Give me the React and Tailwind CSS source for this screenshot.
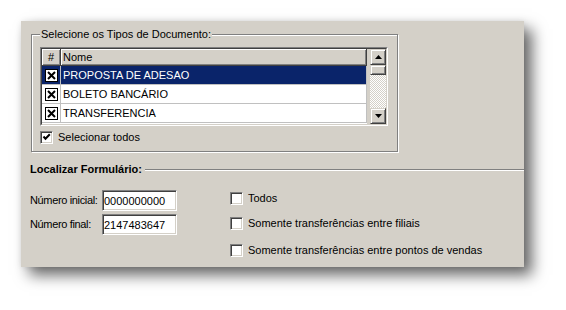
import React from 'react';

const rows = [
  { id: 1, name: 'PROPOSTA DE ADESAO', selected: true },
  { id: 2, name: 'BOLETO BANCÁRIO', selected: false },
  { id: 3, name: 'TRANSFERENCIA', selected: false },
];

const options = [
  { label: 'Todos', mt: 'mt-0' },
  { label: 'Somente transferências entre filiais', mt: 'mt-[12px]' },
  { label: 'Somente transferências entre pontos de vendas', mt: 'mt-[14px]' },
];

// bold X box used by the grid check column
function XBox() {
  return (
    <svg width="13" height="13" viewBox="0 0 13 13" className="block">
      <rect x="0.5" y="0.5" width="12" height="12" fill="white" stroke="black" />
      <path d="M3 3 L10 10 M10 3 L3 10" stroke="black" strokeWidth="2" />
    </svg>
  );
}

// sunken win98 style checkbox
function CheckBox({ checked }) {
  return (
    <div className="w-[13px] h-[13px] shrink-0 bg-white border border-t-[#808080] border-l-[#808080] border-b-white border-r-white shadow-[inset_1px_1px_0_#404040,inset_-1px_-1px_0_#d4d0c8]">
      {checked && (
        <svg width="11" height="11" viewBox="0 0 11 11" className="block">
          <path d="M2.5 4.5 L4.5 6.8 L8.8 2.2" fill="none" stroke="black" strokeWidth="2" />
        </svg>
      )}
    </div>
  );
}

function ScrollButton({ up }) {
  return (
    <div className="h-[16px] w-[16px] flex items-center justify-center bg-[#d4d0c8] border border-t-[#d4d0c8] border-l-[#d4d0c8] border-b-[#404040] border-r-[#404040] shadow-[inset_1px_1px_0_white,inset_-1px_-1px_0_#808080]">
      <svg width="7" height="4" viewBox="0 0 7 4" className="block">
        {up ? <path d="M3.5 0 L7 4 L0 4 Z" fill="black" /> : <path d="M0 0 L7 0 L3.5 4 Z" fill="black" />}
      </svg>
    </div>
  );
}

export default function App() {
  return (
    <div className="min-h-screen bg-white pt-[21px] pl-[21px] font-['Liberation_Sans',Arial,sans-serif] text-[11px] text-black select-none">
      <div className="w-[503px] h-[246px] bg-[#d4d0c8] shadow-[8px_8px_14px_rgba(0,0,0,0.6),0_0_6px_rgba(0,0,0,0.08)]">

        {/* TIPOS DE DOCUMENTO GROUP */}
        <div className="pt-[7px] pl-[10px]">
          <fieldset className="w-[367px] h-[124px] border border-[#808080] shadow-[inset_1px_1px_0_white,1px_1px_0_white] px-[8px]">
            <legend className="px-[1px] leading-[13px] bg-[#d4d0c8]">Selecione os Tipos de Documento:</legend>

            <div className="mt-[6px] w-[348px] h-[79px] border border-t-[#808080] border-l-[#808080] border-b-white border-r-white">
              <div className="h-full flex border border-t-[#404040] border-l-[#404040] border-b-[#d4d0c8] border-r-[#d4d0c8] bg-[#d4d0c8]">
                <div className="flex-1 overflow-hidden">
                  <div className="w-[325px] h-full bg-white flex flex-col">
                    <div className="h-[17px] flex shrink-0 bg-[#d4d0c8]">
                      <div className="w-[19px] flex items-center justify-center border-r border-b border-[#404040] shadow-[inset_1px_1px_0_white,inset_-1px_-1px_0_#808080]">#</div>
                      <div className="flex-1 flex items-center pl-[2px] border-r border-b border-[#404040] shadow-[inset_1px_1px_0_white,inset_-1px_-1px_0_#808080]">Nome</div>
                    </div>
                    {rows.map((r) => (
                      <div key={r.id} className={`h-[19px] flex shrink-0 ${r.selected ? 'bg-[#0a246a] text-white' : 'bg-white'}`}>
                        <div className="w-[19px] flex items-center justify-center border-r border-b border-[#c0c0c0]">
                          <XBox />
                        </div>
                        <div className="flex-1 flex items-center pl-[2px] border-b border-[#c0c0c0] border-r">{r.name}</div>
                      </div>
                    ))}
                  </div>
                </div>
                <div className="w-[16px] flex flex-col">
                  <ScrollButton up />
                  <div className="h-[10px] bg-[#d4d0c8] border border-t-[#d4d0c8] border-l-[#d4d0c8] border-b-[#404040] border-r-[#404040] shadow-[inset_1px_1px_0_white,inset_-1px_-1px_0_#808080]" />
                  <div className="flex-1 bg-[repeating-conic-gradient(#d4d0c8_0_25%,white_0_50%)] bg-[length:2px_2px]" />
                  <ScrollButton />
                </div>
              </div>
            </div>

            <div className="mt-[5px] flex items-center gap-[5px]">
              <CheckBox checked />
              <span className="leading-[13px]">Selecionar todos</span>
            </div>
          </fieldset>
        </div>

        {/* LOCALIZAR FORMULARIO */}
        <div className="mt-[11px] ml-[9px] flex items-center">
          <span className="font-bold leading-[13px]">Localizar Formulário:</span>
          <div className="flex-1 ml-[3px] h-[2px] border-t border-t-[#808080] border-b border-b-white" />
        </div>

        <div className="ml-[9px] flex">
          <div className="w-[200px] shrink-0 mt-[14px] flex flex-col gap-[3px]">
            <div className="flex items-center h-[21px]">
              <span className="w-[72px] shrink-0 whitespace-nowrap tracking-[-0.35px]">Número inicial:</span>
              <input readOnly value="0000000000" className="w-[75px] h-[21px] pl-[1px] outline-none bg-white font-['Liberation_Sans',Arial,sans-serif] text-[11px] border border-t-[#808080] border-l-[#808080] border-b-white border-r-white shadow-[inset_1px_1px_0_#404040,inset_-1px_-1px_0_#d4d0c8]" />
            </div>
            <div className="flex items-center h-[21px]">
              <span className="w-[72px] shrink-0 whitespace-nowrap tracking-[-0.35px]">Número final:</span>
              <input readOnly value="2147483647" className="w-[75px] h-[21px] pl-[1px] outline-none bg-white font-['Liberation_Sans',Arial,sans-serif] text-[11px] border border-t-[#808080] border-l-[#808080] border-b-white border-r-white shadow-[inset_1px_1px_0_#404040,inset_-1px_-1px_0_#d4d0c8]" />
            </div>
          </div>

          <div className="mt-[16px] flex flex-col">
            {options.map((o) => (
              <div key={o.label} className={`flex items-center gap-[5px] ${o.mt}`}>
                <CheckBox />
                <span className="leading-[13px]">{o.label}</span>
              </div>
            ))}
          </div>
        </div>

      </div>
    </div>
  );
}
